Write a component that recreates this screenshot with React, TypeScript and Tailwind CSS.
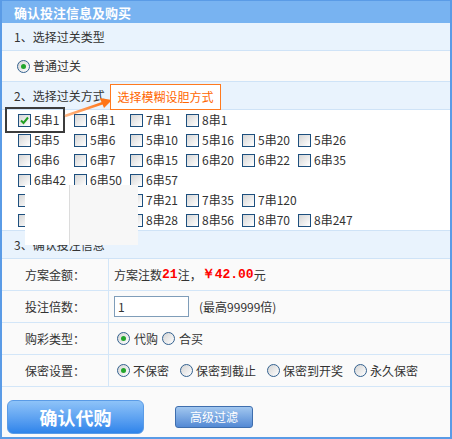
import React from "react";

const rows: string[][] = [
  ["5串1", "6串1", "7串1", "8串1"],
  ["5串5", "5串6", "5串10", "5串16", "5串20", "5串26"],
  ["6串6", "6串7", "6串15", "6串20", "6串22", "6串35"],
  ["6串42", "6串50", "6串57"],
  ["7串7", "7串8", "7串21", "7串35", "7串120"],
  ["8串8", "8串9", "8串28", "8串56", "8串70", "8串247"],
];

const Checkbox = ({ checked }: { checked?: boolean }) => (
  <span className="relative w-[13px] h-[13px] border border-[#1d4f7e] bg-linear-to-br from-[#d6d6d6] to-white shrink-0">
    {checked && (
      <svg className="absolute inset-0" width="11" height="11" viewBox="0 0 11 11">
        <path d="M2 5.5 L4.5 8 L9 2.5" stroke="#23a023" strokeWidth="2" fill="none" />
      </svg>
    )}
  </span>
);

const Radio = ({ checked }: { checked?: boolean }) => (
  <span className="w-[13px] h-[13px] rounded-full border border-[#33618f] bg-linear-to-br from-[#d4d4d4] to-white flex items-center justify-center shrink-0">
    {checked && <span className="w-[5px] h-[5px] rounded-full bg-[#22a52b]" />}
  </span>
);

const Header = ({ children }: { children: React.ReactNode }) => (
  <div className="h-[28px] flex items-center pl-3 bg-[#e9f3fd] border-b border-[#cfe3f7]">
    {children}
  </div>
);

const Row = ({ label, children }: { label: string; children: React.ReactNode }) => (
  <div className="h-[32px] flex bg-[#fafafa] border-b border-[#d3e6f8]">
    <div className="w-[107px] flex items-center justify-center border-r border-[#d3e6f8]">
      {label}
    </div>
    <div className="flex-1 flex items-center pl-[5px]">{children}</div>
  </div>
);

export default function App() {
  return (
    <div className="relative w-[452px] h-[439px] border-x-2 border-b-2 border-t border-[#5a9be6] bg-[#fafafa] text-[12px] text-[#333] font-['Noto_Sans_CJK_SC',sans-serif] leading-none overflow-hidden">
      {/* title */}
      <div className="h-[22px] flex items-center pl-3 bg-[#78b3f1] text-white text-[13px] font-bold">
        确认投注信息及购买
      </div>

      <Header>1、选择过关类型</Header>
      <div className="h-[31px] flex items-center pl-[15px] gap-[3px] bg-[#fafafa] border-b border-[#cfe3f7]">
        <Radio checked />
        <span>普通过关</span>
      </div>

      <Header>2、选择过关方式</Header>
      <div className="h-[121px] bg-white border-b border-[#cfe3f7] pl-4">
        {rows.map((r, i) => (
          <div key={i} className="h-[20px] flex">
            {r.map((c, j) => (
              <div key={c} className="w-[56px] flex items-center gap-[3px]">
                <Checkbox checked={i === 0 && j === 0} />
                <span>{c}</span>
              </div>
            ))}
          </div>
        ))}
      </div>

      <Header>3、确认投注信息</Header>
      <Row label="方案金额：">
        <span>方案注数</span>
        <span className="text-[#ff0000] font-bold font-['Liberation_Mono',monospace] text-[13px]">21</span>
        <span>注，</span>
        <span className="text-[#ff0000] font-bold font-['Liberation_Mono',monospace] text-[13px]">￥42.00</span>
        <span>元</span>
      </Row>
      <Row label="投注倍数：">
        <div className="w-[75px] h-[21px] border border-[#7f9db9] bg-white flex items-center pl-[3px]">1</div>
        <span className="ml-[10px]">(最高99999倍)</span>
      </Row>
      <Row label="购彩类型：">
        <div className="flex items-center gap-[4px] pl-[3px]">
          <Radio checked />
          <span>代购</span>
          <Radio />
          <span>合买</span>
        </div>
      </Row>
      <Row label="保密设置：">
        <div className="flex items-center pl-[3px]">
          <Radio checked />
          <span className="ml-[3px] mr-[11px]">不保密</span>
          <Radio />
          <span className="ml-[3px] mr-[11px]">保密到截止</span>
          <Radio />
          <span className="ml-[3px] mr-[11px]">保密到开奖</span>
          <Radio />
          <span className="ml-[3px]">永久保密</span>
        </div>
      </Row>

      {/* buttons */}
      <div className="flex items-center pt-[10px] pl-[5px] gap-[31px] h-[50px]">
        <button className="w-[137px] h-[34px] rounded-[6px] border border-[#5a9be6] bg-linear-to-b from-[#8ec3f8] to-[#2e84ea] text-white text-[18px] font-bold">
          确认代购
        </button>
        <button className="w-[78px] h-[22px] rounded-[3px] border border-[#3e6eae] bg-linear-to-b from-[#a2c7ef] to-[#5389d4] text-white text-[12px]">
          高级过滤
        </button>
      </div>

      {/* black highlight around 5串1 */}
      <div className="absolute left-[3px] top-[106px] w-[60px] h-[26px] border-2 border-[#3c3c3c]" />

      {/* arrow to tip */}
      <svg className="absolute left-[58px] top-[90px]" width="54" height="30" viewBox="0 0 54 30">
        <defs>
          <linearGradient id="ar" x1="0" y1="1" x2="1" y2="0">
            <stop offset="0" stopColor="#ffb887" />
            <stop offset="1" stopColor="#ff7518" />
          </linearGradient>
        </defs>
        <path d="M5 25 L43 12" stroke="url(#ar)" strokeWidth="2.5" fill="none" />
        <path d="M52 9 L40 7 L44 17 Z" fill="#ff7518" />
      </svg>

      {/* tip box */}
      <div className="absolute left-[108px] top-[83px] w-[111px] h-[26px] border border-[#ff7a1f] bg-white text-[#ff6600] text-[12px] flex items-center justify-center">
        选择模糊设胆方式
      </div>

      {/* stray white panel */}
      <div className="absolute left-[23px] top-[184px] w-[113px] h-[60px] flex">
        <div className="w-[45px] bg-white border-r border-[#dcdcdc]" />
        <div className="flex-1 bg-[#f7f7f7]" />
      </div>
    </div>
  );
}
